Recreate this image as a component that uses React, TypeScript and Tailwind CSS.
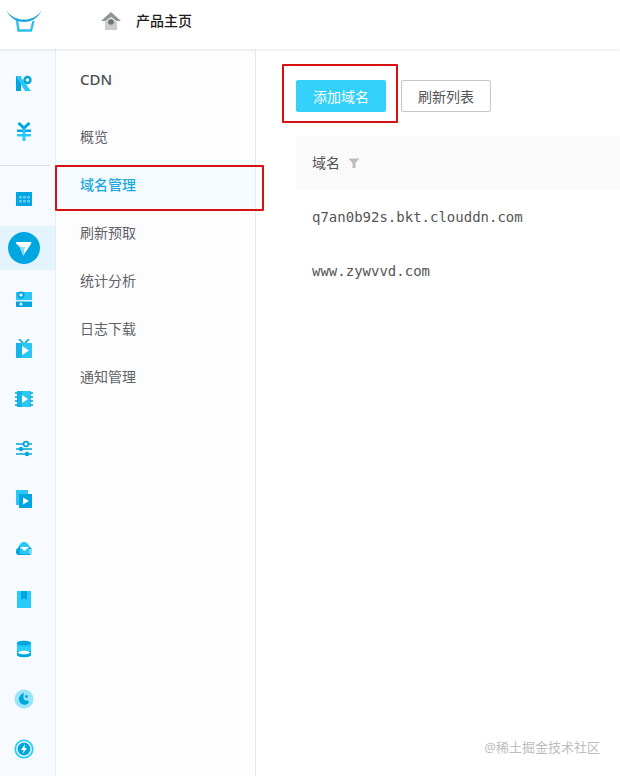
import type { ReactNode } from "react";

const BLUE = "#00a6e0";
const CYAN = "#2cc8f5";

function Icon({ children }: { children: ReactNode }) {
  return (
    <svg width="20" height="20" viewBox="0 0 20 20" className="block">
      {children}
    </svg>
  );
}

const railTop: ReactNode[] = [
  <Icon key="r">
    <path d="M2 3h5v15H2z" fill={BLUE} />
    <path d="M2 3h4l11 15h-6z" fill={CYAN} />
    <circle cx="13.5" cy="7" r="3" fill="none" stroke={BLUE} strokeWidth="2.4" />
  </Icon>,
  <Icon key="y">
    <path d="M4.500 1l5.500 5 5.500-5" fill="none" stroke={BLUE} strokeWidth="3" />
    <path d="M3 7.500h14V10H3z" fill={BLUE} />
    <path d="M3 12h14v2.500H3z" fill={CYAN} />
    <path d="M8.500 7.500h3V19h-3z" fill={CYAN} />
  </Icon>,
];

const railBottom: ReactNode[] = [
  <Icon key="player">
    <path d="M2 3h16v8.200H2z" fill={CYAN} />
    <path d="M2 12.500h16V18H2z" fill={BLUE} />
    <circle cx="7" cy="6" r="3.600" fill={BLUE} />
    <circle cx="7" cy="6" r="1.600" fill="#fff" />
    <circle cx="7" cy="15.200" r="1.400" fill="#fff" />
  </Icon>,
  <Icon key="tv">
    <path d="M5 0l5 5 5-5" fill="none" stroke={BLUE} strokeWidth="1.600" />
    <path d="M2 4h16v15H2z" fill={CYAN} />
    <path d="M2 4h6v15H2z" fill={BLUE} opacity="0.55" />
    <path d="M8 7l7 4.500-7 4.500z" fill="#fff" />
  </Icon>,
  <Icon key="film">
    <path d="M3 2h14v16H3z" fill={CYAN} />
    <path d="M3 2h5v16H3z" fill={BLUE} opacity="0.55" />
    <path d="M1 4h3M1 8h3M1 12h3M1 16h3M16 4h3M16 8h3M16 12h3M16 16h3" stroke={BLUE} strokeWidth="1.600" />
    <path d="M8 6l6 4-6 4z" fill="#fff" />
  </Icon>,
  <Icon key="sliders">
    <path d="M2 5h16M2 10h16M2 15h16" stroke={BLUE} strokeWidth="1.600" />
    <circle cx="12" cy="5" r="2.400" fill="#f7fbff" stroke={BLUE} strokeWidth="1.600" />
    <circle cx="7" cy="10" r="2.200" fill={BLUE} />
    <circle cx="13" cy="15" r="2.200" fill={BLUE} />
  </Icon>,
  <Icon key="doc">
    <path d="M2 1h12v15H2z" fill={CYAN} />
    <path d="M5 5h13v14H5z" fill={BLUE} />
    <path d="M9 8.500l6 3.500-6 3.500z" fill="#fff" />
  </Icon>,
  <Icon key="cloud">
    <path d="M5 8a5 5 0 0 1 10 0z" fill={CYAN} />
    <path d="M5 7h10l3 3v3a3 3 0 0 1-2 3H4a3.500 3.500 0 0 1-2-4 3 3 0 0 1 2-3z" fill={BLUE} />
    <path d="M6 7h9v8H6z" fill={CYAN} />
    <path d="M6 8h9l-4.500 4z" fill="#fff" />
    <path d="M15 10h3v5h-3z" fill="#7fdcf8" />
  </Icon>,
  <Icon key="book">
    <path d="M3 2h14v17H3z" fill="#27cdfb" />
    <path d="M7 2h6v9l-3-2-3 2z" fill={BLUE} />
  </Icon>,
  <Icon key="db">
    <path d="M3 4c0-3 14-3 14 0v12c0 3-14 3-14 0z" fill={BLUE} />
    <path d="M3 5c2 2 12 2 14 0v7H3z" fill="#27cdfb" />
    <ellipse cx="10" cy="13.500" rx="6" ry="1.800" fill="#fff" />
  </Icon>,
  <Icon key="moon">
    <circle cx="10" cy="10" r="9.500" fill="#98e4fb" />
    <path d="M10 4c-4 1-6 5-4.500 8.500 1.500 3.500 6.500 4.500 9 1.500 1-1.500 0-2.500-1.500-2.500-3 0-3.500-1.500-3.500-3 0-2 0-3 .5-4.500z" fill={BLUE} />
    <circle cx="12.500" cy="7.500" r="1.400" fill={BLUE} />
  </Icon>,
  <Icon key="bolt">
    <circle cx="10" cy="10" r="8.700" fill="#fff" stroke="#27cdfb" strokeWidth="1.800" />
    <circle cx="10" cy="10" r="6.500" fill={BLUE} />
    <path d="M11 5l-4 6h2.500l-1 4 4.500-6h-2.500z" fill="#fff" />
  </Icon>,
];

const subItems = ["概览", "域名管理", "刷新预取", "统计分析", "日志下载", "通知管理"];

export default function App() {
  return (
    <div
      className="relative flex h-[776px] w-[620px] flex-col overflow-hidden bg-white text-[14px]"
      style={{ fontFamily: '"Noto Sans", "Noto Sans CJK SC", sans-serif' }}
    >
      {/* Header */}
      <header className="relative z-10 flex h-[49px] shrink-0 items-center bg-white shadow-[0_1px_3px_rgba(0,0,0,0.1)]">
        <svg width="38" height="24" viewBox="0 0 38 24" className="ml-[5px] mt-[-7px] block">
          <path d="M12 11l1.500 10.500H26L28.500 12" fill="none" stroke="#2fc0ea" strokeWidth="2.400" />
          <path d="M1 1C6 8 12 10.500 19 10.500S32 8 37 1C33 9 27 13 19 13S5 9 1 1z" fill="#1da7d8" />
        </svg>
        <svg width="20" height="18" viewBox="0 0 20 18" className="ml-[58px] mt-[-8px] block">
          <path d="M10 0L0 9h4.500L10 5l5.500 4H20z" fill="#8f9499" />
          <path d="M4 10l6-4 6 4v8H4z" fill="#c9cbce" />
          <circle cx="10" cy="10" r="2.800" fill="#6e7377" />
        </svg>
        <span className="ml-[15px] mt-[-9px] font-medium text-[#1c1c1c]">产品主页</span>
      </header>

      <div className="flex min-h-0 flex-1">
        {/* Icon rail */}
        <nav className="flex w-[56px] shrink-0 flex-col border-r border-[#e8ebf0] bg-[#f7fbff]">
          <div className="flex flex-col items-center gap-[29px] pr-[7px] pt-[24px]">
            {railTop.map((icon) => icon)}
          </div>
          <div className="mt-[23px] h-px w-[50px] bg-[#d9dce6]" />
          <div className="mt-[23px] flex justify-center pr-[7px]">
            <Icon>
              <path d="M2 3h16v14H2z" fill={BLUE} />
              <path d="M5 7h3v2.500H5zM9 7h3v2.500H9zM13 7h3v2.500h-3zM5 11h3v2.500H5zM9 11h3v2.500H9zM13 11h3v2.500h-3z" fill="#5cc9ee" />
            </Icon>
          </div>
          <div className="mt-[17px] flex h-[44px] items-center justify-center bg-[#e4f4fd] pr-[7px]">
            <div className="flex h-[32px] w-[32px] items-center justify-center rounded-full bg-[#00a6e0]">
              <svg width="18" height="18" viewBox="0 0 18 18" className="block">
                <path d="M1.500 3h14q1.500 0 .8 1.500L8 17l1.500-9H5L1 4.500Q.5 3 1.500 3z" fill="#fff" />
                <path d="M4.500 8h5L8 16.500z" fill="#7fe3fb" />
              </svg>
            </div>
          </div>
          <div className="mt-[19px] flex flex-col items-center gap-[30px] pr-[7px]">
            {railBottom.map((icon) => icon)}
          </div>
        </nav>

        {/* Sub navigation */}
        <aside className="w-[200px] shrink-0 border-r border-[#e8e8ee] bg-[#fdfdfe]">
          <div className="flex h-[60px] items-center pl-[24px] text-[15px] font-medium text-[#4c4f54]">CDN</div>
          <ul className="mt-[3px]">
            {subItems.map((item) => (
              <li
                key={item}
                className={
                  item === "域名管理"
                    ? "flex h-[48px] items-center bg-[#f5fcff] pl-[24px] font-medium text-[#1fa8e0]"
                    : "flex h-[48px] items-center pl-[24px] text-[#5f6368]"
                }
              >
                {item}
              </li>
            ))}
          </ul>
        </aside>

        {/* Main */}
        <main className="min-w-0 flex-1 bg-white pl-[40px] pt-[31px]">
          <div className="flex gap-[15px]">
            <button className="h-[32px] w-[90px] rounded-[2px] bg-[#33d0f9] text-white">添加域名</button>
            <button className="h-[32px] w-[90px] rounded-[2px] border border-[#c4c6c8] bg-white text-[#555]">刷新列表</button>
          </div>
          <div className="mt-[24px] flex h-[54px] items-center gap-[8px] bg-[#fafafa] pb-[2px] pl-[16px] text-[#555]">
            <span>域名</span>
            <svg width="12" height="12" viewBox="0 0 12 12" className="mt-[1px] block">
              <path d="M0.500 1.500h11L7.500 6v5h-3V6z" fill="#bdbdbd" />
            </svg>
          </div>
          <div className="flex h-[54px] items-center pl-[16px] text-[#555]" style={{ fontFamily: '"DejaVu Sans Mono", monospace' }}>
            q7an0b92s.bkt.clouddn.com
          </div>
          <div className="flex h-[54px] items-center pl-[16px] text-[#555]" style={{ fontFamily: '"DejaVu Sans Mono", monospace' }}>
            www.zywvvd.com
          </div>
        </main>
      </div>

      {/* Annotation boxes */}
      <div className="absolute left-[55px] top-[165px] z-20 h-[46px] w-[209px] rounded-[1px] border-2 border-[#d90f12]" />
      <div className="absolute left-[282px] top-[64px] z-20 h-[59px] w-[116px] rounded-[1px] border-2 border-[#d90f12]" />

      {/* Watermark */}
      <div className="absolute right-[20px] top-[738px] z-20 text-[13px] text-[#bcbcbc]">@稀土掘金技术社区</div>
    </div>
  );
}
